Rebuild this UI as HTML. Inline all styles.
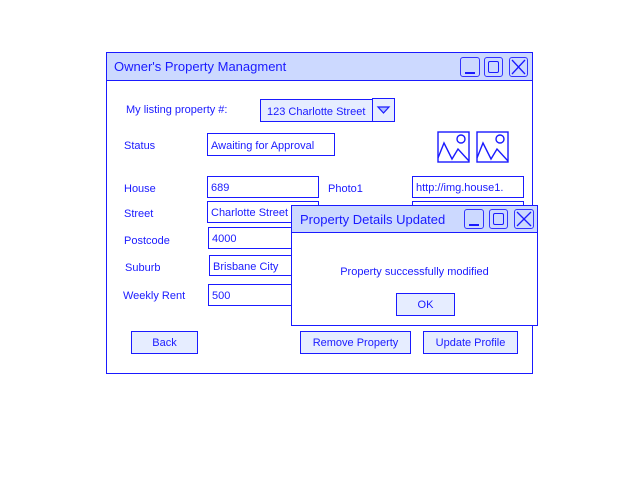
<!DOCTYPE html>
<html><head><meta charset="utf-8"><style>
*{margin:0;padding:0;box-sizing:border-box}
body{width:640px;height:480px;background:#fff;position:relative;overflow:hidden;font-family:"Liberation Sans",sans-serif;color:#1a1aff}
.a{position:absolute}
.b{position:absolute;border:1.5px solid #1a1aff}
.t{position:absolute;font-size:11px;white-space:nowrap;line-height:1}
.f{position:absolute;border:1.5px solid #1a1aff;background:#fff;font-size:11px;line-height:12px;padding-left:3px;padding-top:2px;white-space:nowrap;overflow:hidden;display:flex;align-items:center}
.btn{position:absolute;border:1.5px solid #1a1aff;background:#e6edff;font-size:11px;display:flex;align-items:center;justify-content:center}
.tb{position:absolute;border:1.5px solid #3333ff;border-radius:3px;background:#ccd9ff}
</style></head><body>
<div class="b" style="left:106px;top:52px;width:427px;height:322px;background:#fff"></div>
<div class="b" style="left:106px;top:52px;width:427px;height:29px;background:#ccd9ff"></div>
<div class="t" style="left:114px;top:60px;font-size:13px">Owner's Property Managment</div>
<div class="tb" style="left:460px;top:57px;width:20px;height:20px"></div><div class="a" style="left:465px;top:72px;width:10px;height:1.5px;background:#1a1aff"></div>
<div class="tb" style="left:484px;top:57px;width:19px;height:20px"></div><div class="a" style="left:488px;top:61px;width:11px;height:12px;border:1.5px solid #1a1aff;border-radius:2px"></div>
<div class="tb" style="left:509px;top:57px;width:19px;height:20px"></div>
<svg class="a" style="left:509px;top:57px" width="19" height="20"><path d="M3 3L16 17M16 3L3 17" stroke="#1a1aff" stroke-width="1.3"/></svg>

<div class="t" style="left:126px;top:105px">My listing property #:</div>
<div class="f" style="left:260px;top:99px;width:114px;height:23px;background:#e6edff;padding-left:6px">123 Charlotte Street</div>
<div class="b" style="left:372px;top:98px;width:23px;height:24px;background:#e6edff"></div>
<svg class="a" style="left:372px;top:98px" width="23" height="24"><path d="M6 9L17 9L11.5 15Z" fill="#b0c0ff" stroke="#1a1aff" stroke-width="1.2"/></svg>

<div class="t" style="left:124px;top:141px">Status</div>
<div class="f" style="left:207px;top:133px;width:128px;height:23px">Awaiting for Approval</div>
<svg class="a" style="left:437px;top:131px" width="75" height="33" fill="none" stroke="#1a1aff" stroke-width="1.4"><rect x="1" y="1" width="31" height="30"/><circle cx="24" cy="8" r="4"/><path d="M1 27L7 12L15 28L21 18L32 30"/><rect x="40" y="1" width="31" height="30"/><circle cx="63" cy="8" r="4"/><path d="M40 27L46 12L54 28L60 18L71 30"/></svg>

<div class="t" style="left:124px;top:184px">House</div>
<div class="f" style="left:207px;top:176px;width:112px;height:22px">689</div>
<div class="t" style="left:328px;top:184px">Photo1</div>
<div class="f" style="left:412px;top:176px;width:112px;height:22px">http://img.house1.</div>
<div class="t" style="left:124px;top:209px">Street</div>
<div class="f" style="left:207px;top:201px;width:112px;height:22px">Charlotte Street</div>
<div class="f" style="left:412px;top:201px;width:112px;height:22px"></div>
<div class="t" style="left:124px;top:236px">Postcode</div>
<div class="f" style="left:208px;top:227px;width:112px;height:22px">4000</div>
<div class="t" style="left:125px;top:263px">Suburb</div>
<div class="f" style="left:209px;top:255px;width:112px;height:21px">Brisbane City</div>
<div class="t" style="left:123px;top:291px">Weekly Rent</div>
<div class="f" style="left:208px;top:284px;width:112px;height:22px">500</div>

<div class="btn" style="left:131px;top:331px;width:67px;height:23px">Back</div>
<div class="btn" style="left:300px;top:331px;width:111px;height:23px">Remove Property</div>
<div class="btn" style="left:423px;top:331px;width:95px;height:23px">Update Profile</div>

<div class="b" style="left:291px;top:205px;width:247px;height:121px;background:#fff"></div>
<div class="b" style="left:291px;top:205px;width:247px;height:28px;background:#ccd9ff"></div>
<div class="t" style="left:300px;top:213px;font-size:13px">Property Details Updated</div>
<div class="tb" style="left:464px;top:209px;width:20px;height:20px"></div><div class="a" style="left:469px;top:224px;width:10px;height:1.5px;background:#1a1aff"></div>
<div class="tb" style="left:489px;top:209px;width:19px;height:20px"></div><div class="a" style="left:493px;top:213px;width:11px;height:12px;border:1.5px solid #1a1aff;border-radius:2px"></div>
<div class="tb" style="left:514px;top:209px;width:20px;height:20px"></div>
<svg class="a" style="left:514px;top:209px" width="20" height="20"><path d="M3 3L17 17M17 3L3 17" stroke="#1a1aff" stroke-width="1.3"/></svg>
<div class="t" style="left:291px;width:247px;text-align:center;top:267px">Property successfully modified</div>
<div class="btn" style="left:396px;top:293px;width:59px;height:23px">OK</div>
</body></html>
